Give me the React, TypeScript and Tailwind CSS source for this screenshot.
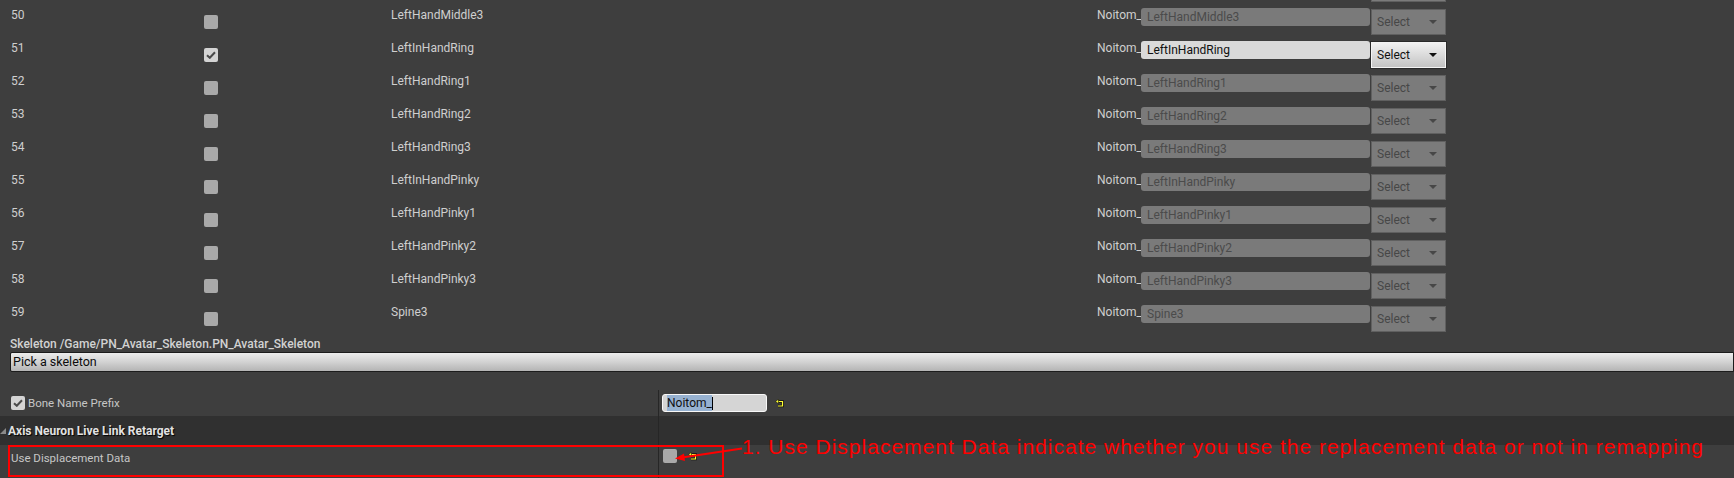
import React from "react";

interface Bone {
  id: number;
  name: string;
  checked?: boolean;
  ghost?: boolean;
}

const bones: Bone[] = [
  { id: 49, name: "LeftHandMiddle2", ghost: true },
  { id: 50, name: "LeftHandMiddle3" },
  { id: 51, name: "LeftInHandRing", checked: true },
  { id: 52, name: "LeftHandRing1" },
  { id: 53, name: "LeftHandRing2" },
  { id: 54, name: "LeftHandRing3" },
  { id: 55, name: "LeftInHandPinky" },
  { id: 56, name: "LeftHandPinky1" },
  { id: 57, name: "LeftHandPinky2" },
  { id: 58, name: "LeftHandPinky3" },
  { id: 59, name: "Spine3" },
];

const Check = () => (
  <svg width="10" height="8" viewBox="0 0 10 8">
    <path d="M1 4.2 L3.8 6.8 L9 1.2" fill="none" stroke="#4a4a4a" strokeWidth="2" />
  </svg>
);

const CheckBox = ({ checked }: { checked?: boolean }) => (
  <div
    className={
      checked
        ? "w-[14px] h-[14px] rounded-[2px] bg-[#d4d4d4] flex items-center justify-center"
        : "w-[14px] h-[14px] rounded-[2px] bg-[#a9a9a9]"
    }
  >
    {checked && <Check />}
  </div>
);

const ResetIcon = () => (
  <svg width="10" height="9" viewBox="0 0 10 9">
    <path d="M3 2.5 H7.5 V7 H3" fill="none" stroke="#111" strokeWidth="2.6" />
    <path d="M3 2.5 H7.5 V7 H3" fill="none" stroke="#ffff33" strokeWidth="1.2" />
    <path d="M0.5 2.5 L3.5 0.2 L3.5 4.8 Z" fill="#ffff33" stroke="#111" strokeWidth="0.6" />
  </svg>
);

const Arrow = () => (
  <svg width="10" height="6" viewBox="0 0 10 6">
    <path d="M1 1 L9 1 L5 5 Z" fill={"currentColor"} />
  </svg>
);

const BoneRow = ({ bone }: { bone: Bone }) => {
  const on = bone.checked;
  const ghost = bone.ghost;
  return (
    <div className="flex h-[33px] items-start text-[12px] leading-4 text-[#cfcfcf]">
      <div className="w-[204px] pl-[11px] pt-[7px]">{!ghost && bone.id}</div>
      <div className="w-[187px] pt-[15px]">
        {!ghost && <CheckBox checked={on} />}
      </div>
      <div className="w-[706px] pt-[7px]">{!ghost && bone.name}</div>
      <div className="w-[44px] pt-[7px] whitespace-nowrap">{!ghost && "Noitom_"}</div>
      <div
        className={
          on
            ? "mt-[8px] h-[18px] w-[229px] rounded-[3px] bg-[#dadada] pl-[6px] pt-[1px] text-[#101010]"
            : "mt-[8px] h-[18px] w-[229px] rounded-[3px] bg-[#7a7a7a] pl-[6px] pt-[1px] text-[#4b4b4b]"
        }
      >
        {!ghost && bone.name}
      </div>
      <div
        className={
          on
            ? "ml-[1px] mt-[9px] flex h-[26px] w-[75px] items-center justify-between border border-[#f4f4f4] bg-gradient-to-b from-[#f2f2f2] to-[#c4c4c4] pl-[5px] pr-[7px] text-[#111] outline outline-1 outline-[#2a2a2a]"
            : "ml-[1px] mt-[9px] flex h-[26px] w-[75px] items-center justify-between border border-[#606060] bg-[#7b7b7b] pl-[5px] pr-[7px] text-[#474747]"
        }
      >
        {!ghost && <span>Select</span>}
        {!ghost && <Arrow />}
      </div>
    </div>
  );
};

export default function App() {
  return (
    <div
      className="relative h-[478px] w-[1734px] overflow-hidden bg-[#3e3e3e]"
      style={{ fontFamily: "Roboto, 'Noto Sans', sans-serif" }}
    >
      <div className="-mt-[33px]">
        {bones.map((b) => (
          <BoneRow key={b.id} bone={b} />
        ))}
      </div>

      <div className="mt-[6px] pl-[10px] text-[12px] font-medium leading-4 text-[#d2d2d2]">
        Skeleton /Game/PN_Avatar_Skeleton.PN_Avatar_Skeleton
      </div>
      <div className="ml-[10px] h-[20px] rounded-l-[2px] border border-[#1c1c1c] bg-gradient-to-b from-[#ececec] via-[#d2d2d2] to-[#b4b4b4] pl-[2px] text-[12.5px] leading-[18px] text-[#0c0c0c]">
        Pick a skeleton
      </div>

      <div className="h-[18px]" />
      <div className="flex h-[26px] text-[12px] leading-4">
        <div className="flex w-[658px] items-center gap-[3px] pl-[11px] text-[#c6c6c6]">
          <CheckBox checked />
          <span className="text-[11.5px]">Bone Name Prefix</span>
        </div>
        <div className="flex items-center gap-[8px] border-l border-[#262626] pl-[3px]">
          <div className="flex h-[18px] w-[105px] items-center rounded-[3px] border border-[#f8f8f8] bg-[#d5d5d5] pl-[4px]">
            <span className="bg-[#97b2d1] text-[#101010]">Noitom_</span>
            <span className="h-[13px] w-px bg-black" />
          </div>
          <ResetIcon />
        </div>
      </div>

      <div className="flex h-[29px] bg-[#303030]">
        <div className="flex w-[658px] items-center">
          <svg width="7" height="7" viewBox="0 0 7 7" className="mr-[1px] mt-[2px]">
            <path d="M6 0 L6 6 L0 6 Z" fill="#8a8a8a" />
          </svg>
          <span
            className="text-[12px] font-bold text-[#e2e2e2]"
            style={{ textShadow: "1px 1px 1px #000" }}
          >
            Axis Neuron Live Link Retarget
          </span>
        </div>
        <div className="border-l border-[#262626]" />
      </div>

      <div className="flex h-[40px]">
        <div className="w-[658px] pl-[11px] pt-[5px] text-[11.5px] leading-4 text-[#c6c6c6]">
          Use Displacement Data
        </div>
        <div className="flex items-start gap-[11px] border-l border-[#262626] pl-[4px] pt-[4px]">
          <CheckBox />
          <div className="pt-[3px]">
            <ResetIcon />
          </div>
        </div>
      </div>

      {/* annotation overlay */}
      <div className="absolute left-[8px] top-[445px] h-[32px] w-[716px] border-2 border-[#ff0000]" />
      <svg className="absolute left-[670px] top-[444px]" width="80" height="22" viewBox="0 0 80 22">
        <path d="M72 4.5 L12 13.5" stroke="#ff0000" strokeWidth="2" />
        <path d="M5 14.5 L14 9.5 L15 17 Z" fill="#ff0000" />
      </svg>
      <div
        className="absolute left-[742px] top-[436px] whitespace-nowrap text-[21px] leading-[21px] tracking-[1px] text-[#ff0000]"
        style={{ fontFamily: "'Liberation Sans', Arial, sans-serif" }}
      >
        1. Use Displacement Data indicate whether you use the replacement data or not in remapping
      </div>
    </div>
  );
}
